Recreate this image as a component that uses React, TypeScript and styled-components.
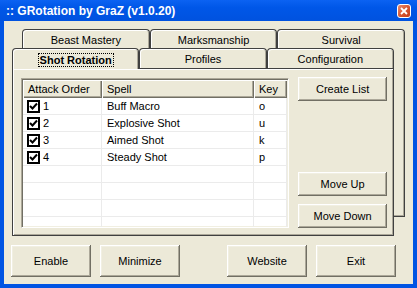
import React from 'react';
import styled, { createGlobalStyle } from 'styled-components';

const GlobalStyle = createGlobalStyle`
  html, body {
    margin: 0;
    padding: 0;
    background: #ffffff;
  }
  body {
    font-family: 'Liberation Sans', Arial, sans-serif;
    font-size: 11px;
    color: #000;
  }
`;

// classic 3d colours
const face = '#ece9d8';
const light = '#f1efe2';
const shadow = '#aca899';
const darkShadow = '#716f64';
const outline = '#404040';
const gridLine = '#ebebeb';

const Window = styled.div`
  width: 417px;
  height: 288px;
  box-sizing: border-box;
  display: flex;
  flex-direction: column;
  background: #0054e3;
  padding: 0 4px 4px 4px;
`;

const TitleBar = styled.div`
  height: 21px;
  flex: none;
  display: flex;
  align-items: center;
  justify-content: space-between;
  padding: 0 2px;
  margin: 0 -4px;
  padding-left: 6px;
  padding-right: 6px;
  background: linear-gradient(180deg, #0b62f2 0%, #0057e8 35%, #0052df 100%);
  color: #fff;
  font-weight: bold;
  font-size: 12px;
  white-space: nowrap;
`;

const CloseButton = styled.div`
  width: 14px;
  height: 14px;
  box-sizing: border-box;
  border: 1px solid #fff;
  border-radius: 3px;
  background: linear-gradient(135deg, #ec8a6c 0%, #d6542f 55%, #c23d19 100%);
  display: flex;
  align-items: center;
  justify-content: center;
`;

const Body = styled.div`
  flex: 1;
  background: ${face};
  padding: 8px 0 0 7px;
  display: flex;
  flex-direction: column;
`;

const TabArea = styled.div`
  margin-left: 1px;
  width: 393px;
`;

const BackRow = styled.div`
  margin-left: 10px;
  height: 19px;
  display: flex;
`;

const Tab = styled.div<{ $selected?: boolean }>`
  flex: 1;
  box-sizing: border-box;
  display: flex;
  align-items: center;
  justify-content: center;
  background: ${face};
  border: 1px solid ${outline};
  border-bottom: none;
  border-radius: 4px 4px 0 0;
  box-shadow: inset 1px 1px #fff, inset -1px 0 ${shadow};
  font-weight: ${(p) => (p.$selected ? 'bold' : 'normal')};
  padding-top: ${(p) => (p.$selected ? '2px' : '1px')};
  position: relative;
  z-index: ${(p) => (p.$selected ? 2 : 0)};
  margin-bottom: ${(p) => (p.$selected ? '-1px' : '0')};
`;

const FocusText = styled.span`
  outline: 1px dotted #000;
  outline-offset: 0;
  padding: 0 1px;
  line-height: 12px;
`;

const Stack = styled.div`
  display: grid;
  grid-template-columns: 382px 11px;
  align-items: start;
`;

const Front = styled.div`
  display: flex;
  flex-direction: column;
`;

const FrontRow = styled.div`
  height: 20px;
  display: flex;
`;

const BackEdge = styled.div`
  height: 169px;
  box-sizing: border-box;
  border-right: 1px solid ${outline};
  border-bottom: 1px solid ${outline};
  box-shadow: inset -1px -1px ${shadow};
`;

const Panel = styled.div`
  height: 168px;
  box-sizing: border-box;
  border: 1px solid ${outline};
  box-shadow: inset 1px 1px #fff, inset -1px -1px ${shadow};
  padding: 9px 6px 0 8px;
  display: flex;
  gap: 9px;
  position: relative;
  z-index: 1;
`;

const ListView = styled.div`
  width: 269px;
  height: 150px;
  box-sizing: border-box;
  background: #fff;
  border-style: solid;
  border-width: 1px;
  border-color: ${shadow} #fff #fff ${shadow};
  box-shadow: inset 1px 1px ${darkShadow}, inset -1px -1px ${light};
  padding: 1px;
  overflow: hidden;
`;

const Row = styled.div<{ $header?: boolean }>`
  display: grid;
  grid-template-columns: 79px 152px 1fr;
  height: ${(p) => (p.$header ? '18px' : '17px')};
`;

const HeadCell = styled.div`
  display: flex;
  align-items: center;
  padding-left: 5px;
  background: ${face};
  box-shadow: inset 1px 1px #fff, inset -1px -1px ${darkShadow},
    inset -2px -2px ${shadow};
  white-space: nowrap;
  overflow: hidden;
`;

const Cell = styled.div`
  display: flex;
  align-items: center;
  gap: 3px;
  padding-left: 5px;
  border-right: 1px solid ${gridLine};
  border-bottom: 1px solid ${gridLine};
  white-space: nowrap;
  overflow: hidden;
`;

const OrderCell = styled(Cell)`
  padding-left: 4px;
`;

const CheckBox = styled.div`
  width: 13px;
  height: 13px;
  box-sizing: border-box;
  border: 2px solid #000;
  background: #fff;
  display: flex;
  align-items: center;
  justify-content: center;
`;

const SideButtons = styled.div`
  width: 89px;
  height: 151px;
  margin-top: -1px;
  display: flex;
  flex-direction: column;
  justify-content: space-between;
`;

const ButtonGroup = styled.div`
  display: flex;
  flex-direction: column;
  gap: 8px;
`;

const Button = styled.div<{ $h?: number; $w?: number }>`
  height: ${(p) => p.$h ?? 24}px;
  width: ${(p) => (p.$w ? `${p.$w}px` : 'auto')};
  box-sizing: border-box;
  display: flex;
  align-items: center;
  justify-content: center;
  background: ${face};
  box-shadow: inset -1px -1px ${darkShadow}, inset 1px 1px #fff,
    inset -2px -2px ${shadow}, inset 2px 2px ${light};
  white-space: nowrap;
`;

const BottomBar = styled.div`
  margin-top: 9px;
  width: 385px;
  display: flex;
  justify-content: space-between;
`;

const BottomGroup = styled.div`
  display: flex;
  gap: 9px;
`;

const spells = [
  { order: '1', spell: 'Buff Macro', key: 'o' },
  { order: '2', spell: 'Explosive Shot', key: 'u' },
  { order: '3', spell: 'Aimed Shot', key: 'k' },
  { order: '4', spell: 'Steady Shot', key: 'p' },
];

const Check = () => (
  <svg width="9" height="9" viewBox="0 0 9 9">
    <path d="M1 4 L3.5 6.5 L8 1.5" stroke="#000" strokeWidth="2" fill="none" />
  </svg>
);

export default function App() {
  const emptyRows = 4;
  return (
    <>
      <GlobalStyle />
      <Window>
        <TitleBar>
          <span>:: GRotation by GraZ (v1.0.20)</span>
          <CloseButton>
            <svg width="8" height="8" viewBox="0 0 8 8">
              <path d="M1 1 L7 7 M7 1 L1 7" stroke="#fff" strokeWidth="1.8" />
            </svg>
          </CloseButton>
        </TitleBar>

        <Body>
          <TabArea>
            {/* back tab row */}
            <BackRow>
              <Tab>Beast Mastery</Tab>
              <Tab>Marksmanship</Tab>
              <Tab>Survival</Tab>
            </BackRow>

            <Stack>
              <Front>
                <FrontRow>
                  <Tab $selected>
                    <FocusText>Shot Rotation</FocusText>
                  </Tab>
                  <Tab>Profiles</Tab>
                  <Tab>Configuration</Tab>
                </FrontRow>

                <Panel>
                  <ListView>
                    <Row $header>
                      <HeadCell>Attack Order</HeadCell>
                      <HeadCell>Spell</HeadCell>
                      <HeadCell>Key</HeadCell>
                    </Row>
                    {spells.map((s) => (
                      <Row key={s.order}>
                        <OrderCell>
                          <CheckBox>
                            <Check />
                          </CheckBox>
                          {s.order}
                        </OrderCell>
                        <Cell>{s.spell}</Cell>
                        <Cell>{s.key}</Cell>
                      </Row>
                    ))}
                    {Array.from({ length: emptyRows }).map((_, i) => (
                      <Row key={'e' + i}>
                        <Cell />
                        <Cell />
                        <Cell />
                      </Row>
                    ))}
                  </ListView>

                  <SideButtons>
                    <Button>Create List</Button>
                    <ButtonGroup>
                      <Button>Move Up</Button>
                      <Button>Move Down</Button>
                    </ButtonGroup>
                  </SideButtons>
                </Panel>
              </Front>
              <BackEdge />
            </Stack>
          </TabArea>

          <BottomBar>
            <BottomGroup>
              <Button $h={32} $w={80}>Enable</Button>
              <Button $h={32} $w={80}>Minimize</Button>
            </BottomGroup>
            <BottomGroup>
              <Button $h={32} $w={80}>Website</Button>
              <Button $h={32} $w={80}>Exit</Button>
            </BottomGroup>
          </BottomBar>
        </Body>
      </Window>
    </>
  );
}
